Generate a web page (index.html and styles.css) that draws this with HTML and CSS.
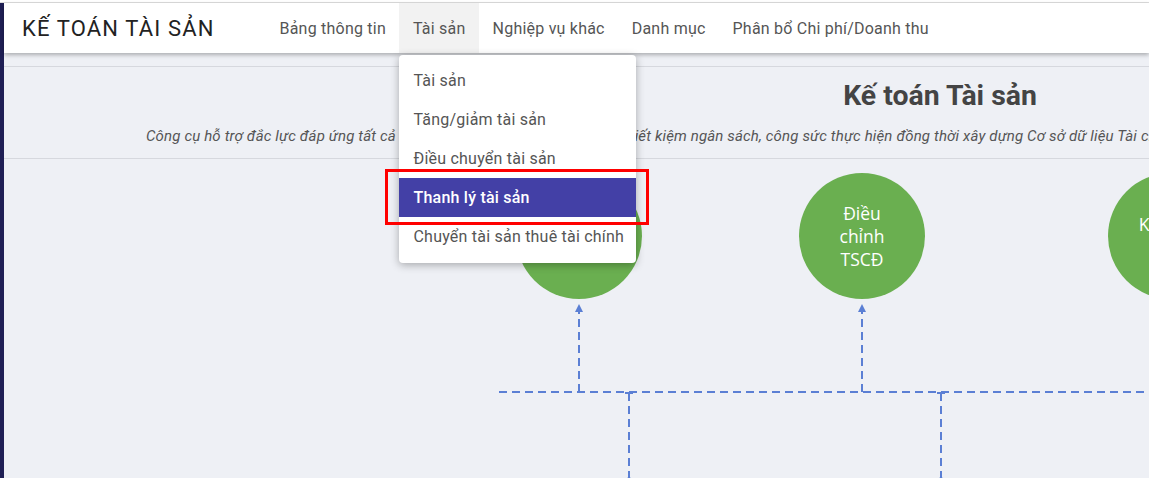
FILE: index.html
```html
<!DOCTYPE html>
<html lang="vi">
<head>
<meta charset="utf-8">
<title>Kế toán Tài sản</title>
<link rel="stylesheet" href="styles.css">
</head>
<body>
<div class="topline"></div>
<div class="app">
  <div class="sidebar"></div>
  <div class="main">
    <header class="header">
      <div class="brand">KẾ TOÁN TÀI SẢN</div>
      <nav class="nav">
        <a class="nav-item">Bảng thông tin</a>
        <a class="nav-item active">Tài sản
          <div class="dropdown">
            <div class="dd-item">Tài sản</div>
            <div class="dd-item">Tăng/giảm tài sản</div>
            <div class="dd-item">Điều chuyển tài sản</div>
            <div class="dd-item selected">Thanh lý tài sản</div>
            <div class="dd-item">Chuyển tài sản thuê tài chính</div>
          </div>
        </a>
        <a class="nav-item">Nghiệp vụ khác</a>
        <a class="nav-item">Danh mục</a>
        <a class="nav-item">Phân bổ Chi phí/Doanh thu</a>
      </nav>
    </header>
    <section class="content">
      <div class="inner">
        <div class="intro">
          <h1 class="title">Kế toán Tài sản</h1>
          <p class="subtitle">Công cụ hỗ trợ đắc lực đáp ứng tất cả nhu cầu quản lý và kế toán tài sản, tiết kiệm ngân sách, công sức thực hiện đồng thời xây dựng Cơ sở dữ liệu Tài chính công thống nhất, đầy đủ và chính xác.</p>
        </div>
        <div class="diagram">
          <svg class="links" width="1872" height="330" viewBox="0 0 1872 330">
            <g fill="none" stroke="#5b7fd4" stroke-width="2" stroke-dasharray="8 5">
              <line x1="495" y1="233" x2="1872" y2="233"/>
              <line x1="575" y1="233" x2="575" y2="152"/>
              <line x1="858" y1="233" x2="858" y2="152"/>
              <line x1="1167" y1="233" x2="1167" y2="152"/>
              <line x1="625" y1="234" x2="625" y2="318"/>
              <line x1="937" y1="234" x2="937" y2="318"/>
            </g>
            <g fill="#5b7fd4">
              <path d="M575 145 L579 153 L571 153 Z"/>
              <path d="M858 145 L862 153 L854 153 Z"/>
              <path d="M1167 145 L1171 153 L1163 153 Z"/>
              <path d="M625 316 L629 324 L621 324 Z"/>
              <path d="M937 316 L941 324 L933 324 Z"/>
              <rect x="621" y="233" width="8" height="2"/>
              <rect x="933" y="233" width="8" height="2"/>
            </g>
          </svg>
          <div class="node n1"><span>Ghi tăng<br>TSCĐ</span></div>
          <div class="node n2"><span>Điều<br>chỉnh<br>TSCĐ</span></div>
          <div class="node n3"><span>Kiểm kê<br>TSCĐ</span></div>
        </div>
      </div>
    </section>
  </div>
</div>
<div class="highlight-box"></div>
</body>
</html>
```

FILE: styles.css
```css
* { box-sizing: border-box; }
html, body {
  margin: 0;
  padding: 0;
  overflow: hidden;
  height: 100%;
}
body {
  background: #eef0f5;
  font-family: Roboto, "Noto Sans", sans-serif;
  color: #555;
  position: relative;
}
.topline {
  height: 3px;
  background: #fff;
  border-bottom: 1px solid #dcdcdc;
}
.app {
  display: flex;
  height: calc(100% - 3px);
}
.sidebar {
  width: 4px;
  flex: none;
  background: #1f1f55;
}
.main {
  flex: 1;
  min-width: 0;
  display: flex;
  flex-direction: column;
}
.header {
  height: 50px;
  background: #fff;
  display: flex;
  align-items: stretch;
  padding-left: 18px;
  box-shadow: 0 2px 4px rgba(0,0,0,0.28);
  position: relative;
  z-index: 5;
  flex: none;
}
.brand {
  display: flex;
  align-items: center;
  font-size: 22px;
  letter-spacing: 1.15px;
  color: #222;
  width: 244px;
  flex: none;
}
.nav {
  display: flex;
  align-items: stretch;
}
.nav-item {
  position: relative;
  display: flex;
  align-items: center;
  padding: 0 13.5px;
  font-size: 16px;
  letter-spacing: 0.22px;
  color: #555;
  white-space: nowrap;
}
.nav-item.active {
  background: #f2f2f2;
}
.dropdown {
  position: absolute;
  left: 0;
  top: 52px;
  width: 237px;
  padding: 6px 0 7px;
  background: #fff;
  border-radius: 4px;
  box-shadow: 0 2px 8px rgba(0,0,0,0.3);
  z-index: 10;
}
.dd-item {
  height: 39px;
  line-height: 39px;
  padding-left: 14px;
  font-size: 16px;
  letter-spacing: 0.22px;
  color: #555;
  white-space: nowrap;
}
.dd-item.selected {
  background: #4340a6;
  color: #fff;
  font-weight: 500;
}
.content {
  flex: 1;
  overflow: hidden;
  padding-top: 13px;
}
.inner {
  width: 1872px;
}
.intro {
  border-top: 1px solid #d6d8de;
  border-bottom: 1px solid #d6d8de;
  height: 93px;
  padding-top: 12px;
}
.title {
  margin: 0;
  text-align: center;
  font-size: 28.4px;
  font-weight: 700;
  color: #444;
  line-height: 34px;
}
.subtitle {
  margin: 13px 0 0;
  padding-left: 142px;
  font-size: 15px;
  font-style: italic;
  letter-spacing: 0.15px;
  color: #555;
  line-height: 20px;
  white-space: nowrap;
}
.diagram {
  position: relative;
  height: 330px;
}
.links {
  position: absolute;
  left: 0;
  top: 0;
}
.node {
  position: absolute;
  top: 14px;
  width: 126px;
  height: 126px;
  border-radius: 50%;
  background: #6aaf50;
  color: #fff;
  font-family: "Open Sans", sans-serif;
  font-size: 17.5px;
  line-height: 23px;
  display: flex;
  align-items: center;
  justify-content: center;
  text-align: center;
}
.n1 { left: 512px; }
.n2 { left: 795px; }
.n3 { left: 1104px; }
.highlight-box {
  position: absolute;
  left: 385px;
  top: 169px;
  width: 264px;
  height: 56px;
  border: 3px solid #ff0000;
  z-index: 20;
}
```
